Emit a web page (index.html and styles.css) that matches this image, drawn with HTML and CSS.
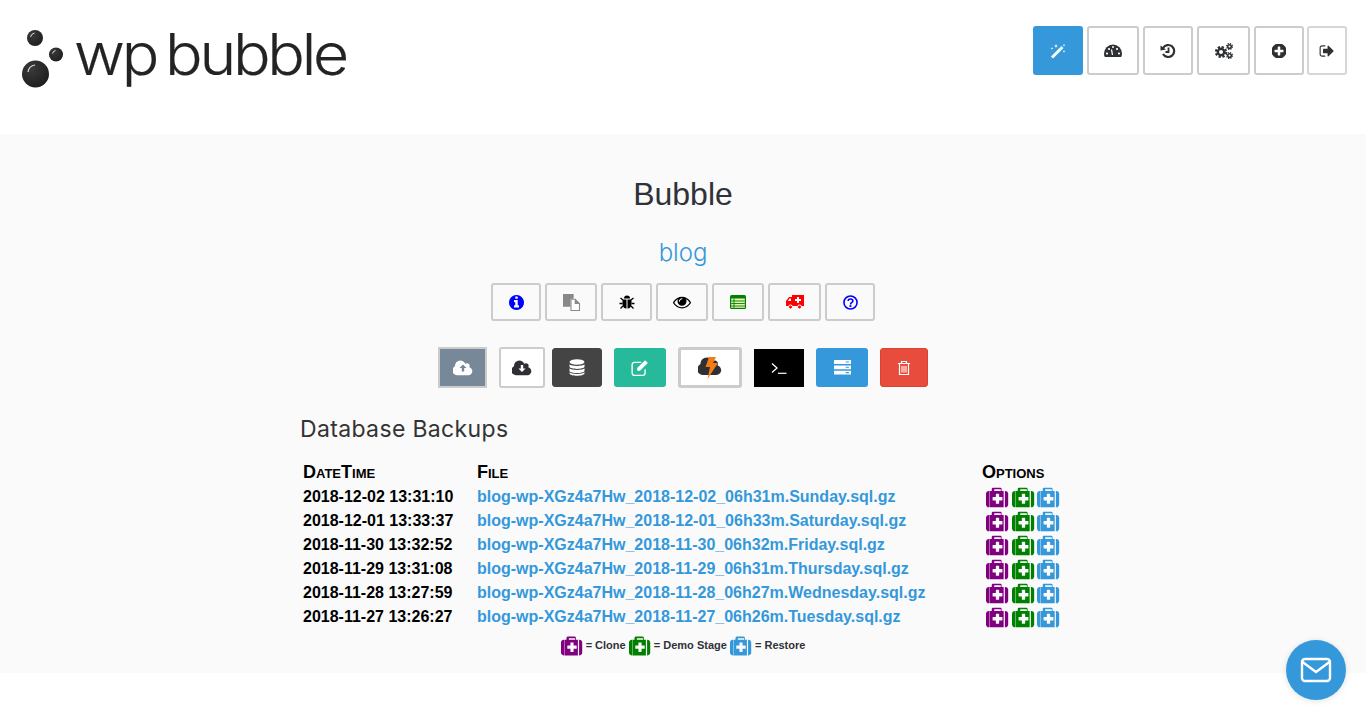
FILE: index.html
```html
<!DOCTYPE html>
<html lang="en">
<head>
<meta charset="utf-8">
<title>WP Bubble</title>
<link rel="stylesheet" href="styles.css">
</head>
<body>
<svg class="defs" width="0" height="0" aria-hidden="true">
<symbol id="medkit" viewBox="0 0 1792 1792"><path fill="currentColor" d="M1280 1088v-192q0-14-9-23t-23-9h-224v-224q0-14-9-23t-23-9h-192q-14 0-23 9t-9 23v224h-224q-14 0-23 9t-9 23v192q0 14 9 23t23 9h224v224q0 14 9 23t23 9h192q14 0 23-9t9-23v-224h224q14 0 23-9t9-23zm-640-704h512v-128h-512v128zm-384 0v1280h-32q-92 0-158-66t-66-158v-832q0-92 66-158t158-66h32zm1120 0v1280h-1088v-1280h160v-160q0-40 28-68t68-28h576q40 0 68 28t28 68v160h160zm352 224v832q0 92-66 158t-158 66h-32v-1280h32q92 0 158 66t66 158z"/></symbol>
<symbol id="cloud" viewBox="0 0 1920 1792"><path fill="currentColor" d="M1856 1216q0 159-112.5 271.5t-271.5 112.5h-1088q-185 0-316.5-131.5t-131.5-316.5q0-132 71-241.5t187-163.5q-2-28-2-43 0-212 150-362t362-150q158 0 286.5 88t187.5 230q70-62 166-62 106 0 181 75t75 181q0 75-41 138 129 30 213 134.5t84 239.5z"/></symbol>
</svg>

<header class="top">
  <a class="logo" href="#">
    <svg class="logo-art" width="330" height="70" viewBox="0 0 330 70">
      <defs>
        <radialGradient id="ball" cx="0.35" cy="0.3" r="0.8"><stop offset="0" stop-color="#3a3a3a"/><stop offset="1" stop-color="#1c1c1c"/></radialGradient>
      </defs>
      <circle cx="15" cy="18" r="8" fill="url(#ball)"/>
      <path d="M10.500 17a5 5 0 0 1 4-4" fill="none" stroke="#ddd" stroke-width="1"/>
      <circle cx="36" cy="34.500" r="7" fill="url(#ball)"/>
      <path d="M32.500 33.500a4 4 0 0 1 3-3" fill="none" stroke="#ddd" stroke-width="1"/>
      <circle cx="15.500" cy="54" r="13.500" fill="url(#ball)"/>
      <path d="M8 52a8 8 0 0 1 7-7" fill="none" stroke="#ddd" stroke-width="1.200"/>
      <text class="logo-word" x="54" y="55" textLength="272" lengthAdjust="spacingAndGlyphs">wp bubble</text>
    </svg>
  </a>
  <nav class="nav">
    <a class="btn nav-btn solid-blue w50" href="#"><svg class="ic" viewBox="0 0 16 16"><path d="M2 14.500 10.500 6" stroke="#fff" stroke-width="3"/><path d="M10.300 6.200 12.500 4" stroke="#dff" stroke-width="3"/><path fill="#fff" d="M6 1l.6 1.400L8 3l-1.400.6L6 5l-.6-1.400L4 3l1.400-.6zM14 .8l.4 1 1 .4-1 .4-.4 1-.4-1-1-.4 1-.4zM14 7l.4 1 1 .4-1 .4-.4 1-.4-1-1-.4 1-.4zM2 4l.4 1 1 .4-1 .4-.4 1-.4-1-1-.4 1-.4z"/></svg></a>
    <a class="btn nav-btn w52" href="#"><svg class="ic ic-wide" viewBox="0 0 18 16"><path fill="#2e3033" d="M0 10.500a9 9 0 1 1 18 0c0 1.500-.4 3-1 3.500H1C.4 13.500 0 12 0 10.500z"/><g fill="#fff"><circle cx="3" cy="10.500" r="1.100"/><circle cx="5" cy="6" r="1.100"/><circle cx="9" cy="4" r="1"/><circle cx="13" cy="6" r="1.100"/><circle cx="15" cy="10.500" r="1.100"/></g><path d="M8.500 12 7.500 6.500" stroke="#fff" stroke-width="1.300"/></svg></a>
    <a class="btn nav-btn w50" href="#"><svg class="ic" viewBox="0 0 16 16"><path d="M3 5a6 6 0 1 1 0 6" fill="none" stroke="#2e3033" stroke-width="2.200"/><path fill="#2e3033" d="M.5 2.500 6 6.500l-5.500 1z"/><path d="M8.500 4.500V9H5.500" fill="none" stroke="#2e3033" stroke-width="1.800"/></svg></a>
    <a class="btn nav-btn w53" href="#"><svg class="ic ic-wide" viewBox="0 0 18 16"><g fill="none" stroke="#2e3033"><circle cx="6" cy="9" r="3.200" stroke-width="2.400"/><circle cx="6" cy="9" r="5" stroke-width="2.200" stroke-dasharray="2.300 1.630"/><circle cx="14.500" cy="3.500" r="1.800" stroke-width="1.500"/><circle cx="14.500" cy="3.500" r="3" stroke-width="1.100" stroke-dasharray="1.300 1.060"/><circle cx="14.500" cy="12.500" r="1.800" stroke-width="1.500"/><circle cx="14.500" cy="12.500" r="3" stroke-width="1.100" stroke-dasharray="1.300 1.060"/></g></svg></a>
    <a class="btn nav-btn w50" href="#"><svg class="ic ic-plus" viewBox="192 192 1408 1408"><path fill="#2e3033" d="M1344 960v-128q0-26-19-45t-45-19h-256v-256q0-26-19-45t-45-19h-128q-26 0-45 19t-19 45v256h-256q-26 0-45 19t-19 45v128q0 26 19 45t45 19h256v256q0 26 19 45t45 19h128q26 0 45-19t19-45v-256h256q26 0 45-19t19-45zm320-64q0 209-103 385.500t-279.500 279.500-385.500 103-385.500-103-279.500-279.500-103-385.500 103-385.500 279.500-279.500 385.500-103 385.500 103 279.500 279.500 103 385.500z"/></svg></a>
    <a class="btn nav-btn thin w40" href="#"><svg class="ic" viewBox="0 0 1792 1792"><path fill="#2e3033" d="M704 1440q0 4 1 20t.5 26.500-3 23.500-10 19.500-20.500 6.500h-320q-119 0-203.500-84.500t-84.500-203.500v-704q0-119 84.500-203.500t203.500-84.500h320q13 0 22.500 9.500t9.500 22.500q0 4 1 20t.5 26.500-3 23.500-10 19.500-20.500 6.500h-320q-66 0-113 47t-47 113v704q0 66 47 113t113 47h312l11.500 1 11.500 3 8 5.500 7 9 2 13.500zm928-544q0 26-19 45l-544 544q-19 19-45 19t-45-19-19-45v-288h-448q-26 0-45-19t-19-45v-384q0-26 19-45t45-19h448v-288q0-26 19-45t45-19 45 19l544 544q19 19 19 45z"/></svg></a>
  </nav>
</header>

<main class="panel">
  <h1 class="title">Bubble</h1>
  <h2 class="site">blog</h2>

  <div class="tools">
    <a class="btn tool w50" href="#"><svg class="ic ic-s" viewBox="128 128 1536 1536"><path fill="#0000ff" d="M1152 1376v-160q0-14-9-23t-23-9h-96v-512q0-14-9-23t-23-9h-320q-14 0-23 9t-9 23v160q0 14 9 23t23 9h96v320h-96q-14 0-23 9t-9 23v160q0 14 9 23t23 9h448q14 0 23-9t9-23zm-128-896v-160q0-14-9-23t-23-9h-192q-14 0-23 9t-9 23v160q0 14 9 23t23 9h192q14 0 23-9t9-23zm640 416q0 209-103 385.500t-279.500 279.500-385.500 103-385.500-103-279.500-279.500-103-385.500 103-385.500 279.500-279.500 385.500-103 385.500 103 279.500 279.500 103 385.500z"/></svg></a>
    <a class="btn tool w52" href="#"><svg class="ic ic-tall" viewBox="0 0 16 16"><path fill="#888" d="M0 0h10v4.500H7V12H0z"/><path fill="#fff" stroke="#888" d="M7.500 5h4l4 4v6.500h-8z"/><path fill="#888" d="M11 5v4.500h4.500z"/></svg></a>
    <a class="btn tool w51" href="#"><svg class="ic" viewBox="0 0 16 16"><g stroke="#000" stroke-width="1.300" fill="none"><path d="M4 6 1.500 4M12 6l2.500-2M3.500 9.500H.5M12.500 9.500h3M4 12l-2.500 2.500M12 12l2.500 2.500"/></g><path fill="#000" d="M5 4.500a3 3 0 0 1 6 0zM3.500 5.500h4v9C5 14.500 3.500 12.500 3.500 10zM8.500 5.500h4V10c0 2.500-1.500 4.500-4 4.500z"/></svg></a>
    <a class="btn tool w52" href="#"><svg class="ic ic-wide" viewBox="0 0 1792 1280"><path fill="#000" transform="translate(0 -256)" d="M1664 960q-152-236-381-353 61 104 61 225 0 185-131.500 316.500t-316.500 131.500-316.500-131.500-131.500-316.500q0-121 61-225-229 117-381 353 133 205 333.500 326.500t434.500 121.500 434.500-121.500 333.500-326.500zm-720-384q0-20-14-34t-34-14q-125 0-214.500 89.500t-89.500 214.500q0 20 14 34t34 14 34-14 14-34q0-86 61-147t147-61q20 0 34-14t14-34zm848 384q0 34-20 69-140 230-376.500 368.500t-499.500 138.500-499.500-139-376.500-368q-20-35-20-69t20-69q140-229 376.500-368t499.500-139 499.500 139 376.500 368q20 35 20 69z"/></svg></a>
    <a class="btn tool w52" href="#"><svg class="ic" viewBox="0 0 16 14"><rect width="16" height="14" rx="1.500" fill="#008000"/><path fill="#e6f5b5" d="M1.200 3.500h13.600v9.300H1.200z"/><path stroke="#008000" d="M1.200 6h13.600M1.200 8.500h13.600M1.200 11h13.600" stroke-width=".9"/><path stroke="#008000" stroke-width=".9" d="M4 3.500v9.300"/></svg></a>
    <a class="btn tool w53" href="#"><svg class="ic ic-wide" viewBox="0 0 18 14"><path fill="#f00" d="M6 0h12v11H0V6l3-4h3z"/><circle cx="4.500" cy="12" r="2" fill="#f00" stroke="#fff" stroke-width="1"/><circle cx="13.500" cy="12" r="2" fill="#f00" stroke="#fff" stroke-width="1"/><path fill="#fff" d="M11 2h2v2h2v2h-2v2h-2V6H9V4h2zM3.500 3.500H5V6H1.800z"/></svg></a>
    <a class="btn tool w50" href="#"><svg class="ic ic-s" viewBox="0 0 16 16"><circle cx="8" cy="8" r="7" fill="none" stroke="#0000ff" stroke-width="1.700"/><path d="M5.500 6.300C5.500 3.500 10.500 3.500 10.500 6.300c0 2-2.500 1.800-2.500 3.700" fill="none" stroke="#0000ff" stroke-width="1.700"/><rect x="7" y="10.800" width="2" height="2" fill="#0000ff"/></svg></a>
  </div>

  <div class="actions">
    <a class="act slate" href="#"><svg class="ic ic-cloud" viewBox="0 0 20 16"><use href="#cloud" width="20" height="18.700" y="-1.500" color="#fff"/><path fill="#778899" d="M10 4.500 13.500 8H11.200v3.500H8.800V8H6.500z"/></svg></a>
    <a class="act outline" href="#"><svg class="ic ic-cloud" viewBox="0 0 20 16"><use href="#cloud" width="20" height="18.700" y="-1.500" color="#2e3033"/><path fill="#fff" d="M10 12 6.500 8.500H8.800V5h2.400v3.500h2.300z"/></svg></a>
    <a class="act dark" href="#"><svg class="ic ic-db" viewBox="0 0 16 18"><g fill="#fff"><ellipse cx="8" cy="3" rx="7.500" ry="2.800"/><path d="M.5 5.200c1.500 2.300 13.500 2.300 15 0v2.600c-1 2.800-14 2.800-15 0zM.5 9.300c1.500 2.300 13.500 2.300 15 0v2.600c-1 2.800-14 2.800-15 0zM.5 13.300c1.500 2.300 13.500 2.300 15 0v1.200c-1 3-14 3-15 0z"/></g></svg></a>
    <a class="act green" href="#"><svg class="ic ic-edit" viewBox="0 0 16 16"><path d="M12.500 9v3.500a2 2 0 0 1-2 2H3a2 2 0 0 1-2-2V5a2 2 0 0 1 2-2h6" fill="none" stroke="#fff" stroke-width="1.200"/><path fill="#fff" d="M5.500 8 12.500 1 15 3.500 8 10.500H5.500z"/></svg></a>
    <a class="act bolt" href="#"><svg class="ic ic-bolt" viewBox="0 0 24 22"><use href="#cloud" width="24" height="22.400" y="-2" color="#2e3033"/><path fill="#f47b16" d="M11 0h7l-3 6h5L9.500 22l2.500-12H7.500z"/></svg></a>
    <a class="act term" href="#"><svg class="ic" viewBox="0 0 16 12"><path d="M1 1.500 6 6l-5 4.500" fill="none" stroke="#fff" stroke-width="1.300"/><path d="M7 11.300h8.500" stroke="#fff" stroke-width="1.200"/></svg></a>
    <a class="act blue" href="#"><svg class="ic ic-server" viewBox="0 0 16 14"><path fill="#fff" d="M0 0h16v3.700H0zM0 5h16v3.700H0zM0 10h16v3.700H0z"/><path fill="#3498db" d="M11 1.300h3v1h-3zM11 6.300h3v1h-3zM11 11.300h3v1h-3z"/></svg></a>
    <a class="act red" href="#"><svg class="ic ic-trash" viewBox="0 0 14 16"><path d="M1 3.500h12M4.500 3.500V1.500h5v2M2.500 3.500v11h9v-11" fill="none" stroke="#fff" stroke-width="1.200"/><path d="M5 6v6.500M7 6v6.500M9 6v6.500" stroke="#fff" stroke-width="1.100"/></svg></a>
  </div>

  <section class="backups">
    <h3 class="backups-title">Database Backups</h3>
    <table class="files">
      <thead>
        <tr><th class="c-date">DateTime</th><th class="c-file">File</th><th class="c-opt">Options</th></tr>
      </thead>
      <tbody>
        <tr><td>2018-12-02 13:31:10</td><td><a href="#">blog-wp-XGz4a7Hw_2018-12-02_06h31m.Sunday.sql.gz</a></td><td class="kits"><svg class="kit purple"><use href="#medkit"/></svg><svg class="kit forest"><use href="#medkit"/></svg><svg class="kit sky"><use href="#medkit"/></svg></td></tr>
        <tr><td>2018-12-01 13:33:37</td><td><a href="#">blog-wp-XGz4a7Hw_2018-12-01_06h33m.Saturday.sql.gz</a></td><td class="kits"><svg class="kit purple"><use href="#medkit"/></svg><svg class="kit forest"><use href="#medkit"/></svg><svg class="kit sky"><use href="#medkit"/></svg></td></tr>
        <tr><td>2018-11-30 13:32:52</td><td><a href="#">blog-wp-XGz4a7Hw_2018-11-30_06h32m.Friday.sql.gz</a></td><td class="kits"><svg class="kit purple"><use href="#medkit"/></svg><svg class="kit forest"><use href="#medkit"/></svg><svg class="kit sky"><use href="#medkit"/></svg></td></tr>
        <tr><td>2018-11-29 13:31:08</td><td><a href="#">blog-wp-XGz4a7Hw_2018-11-29_06h31m.Thursday.sql.gz</a></td><td class="kits"><svg class="kit purple"><use href="#medkit"/></svg><svg class="kit forest"><use href="#medkit"/></svg><svg class="kit sky"><use href="#medkit"/></svg></td></tr>
        <tr><td>2018-11-28 13:27:59</td><td><a href="#">blog-wp-XGz4a7Hw_2018-11-28_06h27m.Wednesday.sql.gz</a></td><td class="kits"><svg class="kit purple"><use href="#medkit"/></svg><svg class="kit forest"><use href="#medkit"/></svg><svg class="kit sky"><use href="#medkit"/></svg></td></tr>
        <tr><td>2018-11-27 13:26:27</td><td><a href="#">blog-wp-XGz4a7Hw_2018-11-27_06h26m.Tuesday.sql.gz</a></td><td class="kits"><svg class="kit purple"><use href="#medkit"/></svg><svg class="kit forest"><use href="#medkit"/></svg><svg class="kit sky"><use href="#medkit"/></svg></td></tr>
      </tbody>
    </table>
    <p class="legend"><svg class="kit purple"><use href="#medkit"/></svg> = Clone <svg class="kit forest"><use href="#medkit"/></svg> = Demo Stage <svg class="kit sky"><use href="#medkit"/></svg> = Restore</p>
  </section>
</main>

<a class="chat" href="#" aria-label="Contact"><svg width="32" height="26" viewBox="0 0 32 26"><rect x="2" y="2" width="28" height="22" rx="3" fill="none" stroke="#fff" stroke-width="2.400"/><path d="M2.500 5 16 15 29.500 5" fill="none" stroke="#fff" stroke-width="2.400"/></svg></a>
</body>
</html>
```
FILE: styles.css
```css
* { box-sizing: border-box; }
html, body { margin: 0; padding: 0; }
body {
  background: #fff;
  color: #2f3238;
  font-family: "Liberation Sans", Arial, sans-serif;
  height: 720px;
  overflow: hidden;
}
.defs { position: absolute; }

.top {
  height: 134px;
  display: flex;
  justify-content: space-between;
  align-items: flex-start;
  padding: 26px 19px 0 20px;
}
.logo { display: block; height: 70px; margin-top: -6px; }
.logo-art { display: block; overflow: visible; }
.logo-word {
  font-family: "Inter", sans-serif;
  font-weight: 300;
  font-size: 58px;
  letter-spacing: -3px;
  word-spacing: -5px;
  fill: #232323;
  stroke: #232323;
  stroke-width: .2px;
}

.nav { display: flex; gap: 4px; }
.btn {
  display: flex;
  align-items: center;
  justify-content: center;
  border: 2px solid #ccc;
  border-radius: 3px;
  background: transparent;
}
.nav-btn { height: 49px; }
.nav-btn .ic { margin-top: 1px; }
.nav-btn.thin { border-color: #d6d6d6; margin-left: -1px; }
.solid-blue { background: #3498db; border-color: #3498db; }
.w40 { width: 40px; }
.w50 { width: 50px; }
.w51 { width: 51px; }
.w52 { width: 52px; }
.w53 { width: 53px; }

.ic { width: 16px; height: 16px; display: block; flex: none; }
.ic-wide { width: 18px; height: 16px; }
.ic-s { width: 15px; height: 15px; }
.ic-plus { width: 14px; height: 14px; }
.ic-tall { width: 17px; height: 17px; }
.ic-cloud { width: 20px; height: 16px; }
.ic-db { width: 16px; height: 18px; }
.ic-edit { width: 18px; height: 18px; }
.ic-bolt { width: 24px; height: 22px; }
.ic-server { width: 17px; height: 15px; }
.ic-trash { width: 14px; height: 16px; }

.panel {
  height: 539px;
  background: #fafafa;
  padding-top: 40px;
  display: flex;
  flex-direction: column;
  align-items: center;
}
.title {
  margin: 0;
  font-size: 32px;
  font-weight: 400;
  line-height: 40px;
  color: #2f3238;
}
.site {
  margin: 24px 0 0;
  font-family: "Inter", sans-serif;
  font-size: 24px;
  line-height: 30px;
  font-weight: 300;
  color: #3498db;
}

.tools { display: flex; gap: 4px; margin-top: 15px; height: 38px; }

.actions { display: flex; align-items: center; margin-top: 26px; height: 41px; gap: 12px; }
.act {
  display: flex;
  align-items: center;
  justify-content: center;
  border-radius: 3px;
  height: 39px;
}
.slate { width: 49px; height: 41px; background: #778899; border: 2px solid #ccc; border-radius: 0; }
.outline { width: 46px; height: 41px; background: #fff; border: 2px solid #ccc; border-radius: 3px; margin-right: -5px; }
.dark { width: 50px; background: #444; border: 1px solid #444; }
.green { width: 52px; background: #26b99a; }
.bolt { width: 64px; height: 41px; background: #fff; border: 3px solid #ccc; }
.term { width: 50px; height: 38px; background: #000; border-radius: 0; }
.blue { width: 52px; background: #3498db; }
.red { width: 48px; background: #e74c3c; border: 1px solid #d9432f; }

.backups { width: 768px; margin-top: 27px; }
.backups-title {
  margin: 0 0 17px;
  padding-left: 1px;
  font-family: "Inter", sans-serif;
  font-size: 23px;
  letter-spacing: .35px;
  line-height: 28px;
  font-weight: 400;
  color: #333;
}
.files { border-collapse: collapse; table-layout: fixed; width: 768px; color: #000; }
.files th, .files td { padding: 0 4px; height: 24px; line-height: 24px; font-size: 16px; font-weight: 700; text-align: left; white-space: nowrap; }
.files th { font-variant: small-caps; font-size: 18px; height: 25px; vertical-align: top; }
.c-date { width: 174px; }
.c-file { width: 505px; }
.files a { color: #3498db; text-decoration: none; }
.files td.kits { padding-left: 8px; line-height: 0; font-size: 0; }
.kit { width: 22px; height: 22px; display: inline-block; vertical-align: middle; }
.kits .kit { width: 23px; height: 23px; margin: 1px 2.500px 0 0; vertical-align: top; }
.purple { color: #800080; }
.forest { color: #008000; }
.sky { color: #3498db; }

.legend {
  margin: 4px 0 0;
  text-align: center;
  font-size: 11px;
  font-weight: 700;
  line-height: 24px;
  color: #2f3238;
}

.chat {
  position: fixed;
  left: 1286px;
  top: 640px;
  width: 60px;
  height: 60px;
  border-radius: 50%;
  background: #3498db;
  box-shadow: 0 1px 6px rgba(0,0,0,.12);
  display: flex;
  align-items: center;
  justify-content: center;
}
```
